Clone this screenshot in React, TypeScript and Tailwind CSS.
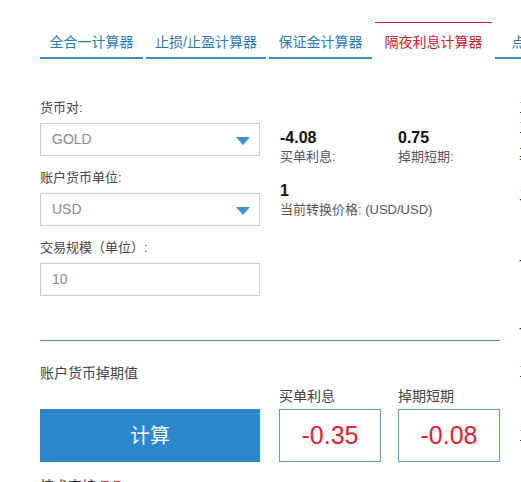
import React from "react";

const tabs = [
  { label: "全合一计算器", w: "w-[103px]" },
  { label: "止损/止盈计算器", w: "w-[120px]" },
  { label: "保证金计算器", w: "w-[103px]" },
  { label: "隔夜利息计算器", w: "w-[117px]" },
  { label: "点值计算器", w: "w-[103px]" },
];
const activeTab = 3;

function Select({ value }: { value: string }) {
  return (
    <div className="h-[33px] w-[220px] border border-[#c9c9c9] bg-white flex items-center justify-between pl-[11px] pr-[9px]">
      <span className="text-[14px] text-[#8a8a8a]">{value}</span>
      <span className="w-0 h-0 mt-[3px] border-l-[7px] border-r-[7px] border-t-[8px] border-l-transparent border-r-transparent border-t-[#3d8fd6]" />
    </div>
  );
}

function Label({ children }: { children: React.ReactNode }) {
  return <div className="text-[13px] leading-[18px] text-[#444] mb-[6px]">{children}</div>;
}

function Stat({ value, label }: { value: string; label: string }) {
  return (
    <div className="w-[118px]">
      <div className="text-[16px] leading-[20px] font-bold text-[#111]">{value}</div>
      <div className="text-[13px] leading-[18px] text-[#555]">{label}</div>
    </div>
  );
}

function ResultBox({ label, value }: { label: string; value: string }) {
  return (
    <div className="flex flex-col">
      <div className="text-[14px] leading-[20px] text-[#444] mb-[3px]">{label}</div>
      <div className="w-[102px] h-[53px] border border-[#5b9bd0] flex items-center justify-center text-[25px] text-[#de2430]">
        {value}
      </div>
    </div>
  );
}

export default function App() {
  return (
    <div
      className="w-[521px] h-[482px] overflow-hidden bg-white flex"
      style={{ fontFamily: '"Liberation Sans", Arial, "Noto Sans CJK SC", sans-serif' }}
    >
      <div className="w-[519px] shrink-0 pl-[40px] pt-[22px]">
        {/* tabs */}
        <div className="flex gap-[3px] whitespace-nowrap">
          {tabs.map((t, i) => (
            <div
              key={t.label}
              className={
                i === activeTab
                  ? `${t.w} shrink-0 text-center pt-[9px] pb-[5px] border-t border-b-2 border-t-[#c8202f] border-b-transparent text-[14px] leading-[20px] text-[#c8202f]`
                  : `${t.w} shrink-0 text-center pt-[9px] pb-[5px] border-t border-b-2 border-t-transparent border-b-[#3a8cc2] text-[14px] leading-[20px] text-[#2b7bb3]`
              }
            >
              {t.label}
            </div>
          ))}
        </div>

        <div className="w-[460px]">
          {/* form */}
          <div className="flex mt-[40px]">
            <div className="w-[220px] shrink-0">
              <Label>货币对:</Label>
              <Select value="GOLD" />
              <div className="mt-[13px]">
                <Label>账户货币单位:</Label>
                <Select value="USD" />
              </div>
              <div className="mt-[13px]">
                <Label>交易规模（单位）:</Label>
                <div className="h-[33px] w-[220px] border border-[#c9c9c9] flex items-center pl-[11px] text-[14px] text-[#8a8a8a]">
                  10
                </div>
              </div>
            </div>
            <div className="ml-[20px] pt-[29px]">
              <div className="flex">
                <Stat value="-4.08" label="买单利息:" />
                <Stat value="0.75" label="掉期短期:" />
              </div>
              <div className="mt-[15px]">
                <div className="text-[16px] leading-[20px] font-bold text-[#111]">1</div>
                <div className="text-[13px] leading-[18px] text-[#555]">当前转换价格: (USD/USD)</div>
              </div>
            </div>
          </div>

          <div className="mt-[44px] border-t border-[#4a90c8]" />

          <div className="mt-[22px] text-[14px] leading-[20px] text-[#444]">账户货币掉期值</div>

          <div className="mt-[3px] flex items-end">
            <button className="w-[220px] h-[53px] bg-[#2b87cb] text-white text-[20px]">计算</button>
            <div className="ml-[19px] flex gap-[17px]">
              <ResultBox label="买单利息" value="-0.35" />
              <ResultBox label="掉期短期" value="-0.08" />
            </div>
          </div>

          <div className="mt-[14px] text-[14px] leading-[20px] text-[#333]">
            技术支持 <span className="text-[#de2430]">E.P</span>
          </div>
        </div>
      </div>

      {/* next column, mostly out of view */}
      <div className="w-[200px] shrink-0 pt-[97px] text-[14px] leading-[20px] text-[#333]">
        <div>三日计算</div>
        <div>三日计算</div>
        <div className="mt-[6px]">其他说明</div>
        <div className="mt-[22px]">二</div>
        <div className="mt-[46px]">一</div>
        <div className="mt-[48px]">一</div>
        <div className="mt-[22px]">三</div>
        <div className="mt-[44px]">三</div>
      </div>
    </div>
  );
}
